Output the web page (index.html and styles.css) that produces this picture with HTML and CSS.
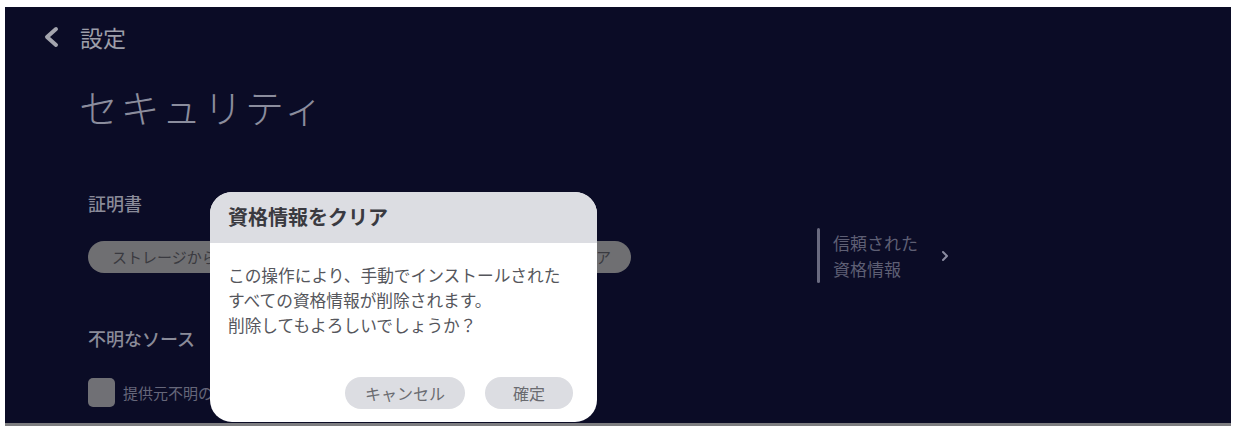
FILE: index.html
```html
<!DOCTYPE html>
<html lang="ja">
<head>
<meta charset="utf-8">
<link rel="stylesheet" href="styles.css">
</head>
<body>
<div class="screen">
  <div class="topbar">
    <svg class="back" width="22" height="24" viewBox="0 0 22 24"><path d="M15 4 L6 12 L15 20" fill="none" stroke="#a4a5ae" stroke-width="4" stroke-linecap="round" stroke-linejoin="round"/></svg>
    <span class="crumb">設定</span>
  </div>
  <h1 class="title">セキュリティ</h1>
  <div class="content">
    <div class="left">
      <div class="section">証明書</div>
      <div class="pills">
        <div class="pill pill-a">ストレージからインストール</div>
        <div class="pill pill-b">資格情報をクリア</div>
      </div>
      <div class="section section2">不明なソース</div>
      <div class="checkrow">
        <span class="box"></span>
        <span class="checklabel">提供元不明のアプリ</span>
      </div>
    </div>
    <div class="right">
      <div class="trust">
        <span class="bar"></span>
        <span class="trusttext">信頼された<br>資格情報</span>
        <svg class="chev" width="10" height="12" viewBox="0 0 10 12"><path d="M3 2 L7 6 L3 10" fill="none" stroke="#8a8ba0" stroke-width="2" stroke-linecap="round" stroke-linejoin="round"/></svg>
      </div>
    </div>
  </div>
  <div class="dialog">
    <div class="dlg-head">資格情報をクリア</div>
    <div class="dlg-body">
      <p>この操作により、手動でインストールされた<br>すべての資格情報が削除されます。<br>削除してもよろしいでしょうか？</p>
    </div>
    <div class="dlg-actions">
      <span class="btn btn-cancel">キャンセル</span>
      <span class="btn btn-ok">確定</span>
    </div>
  </div>
</div>
</body>
</html>
```

FILE: styles.css
```css
html, body {
  margin: 0;
  padding: 0;
  background: #ffffff;
}
body {
  width: 1234px;
  height: 426px;
  overflow: hidden;
  font-family: "Noto Sans CJK JP", "Noto Sans", sans-serif;
}
.screen {
  position: relative;
  margin: 7px 3px 0 5px;
  height: 416px;
  background: #0b0c26;
  border-bottom: 3px solid #7d7d80;
  overflow: hidden;
}
.topbar {
  display: flex;
  align-items: center;
  padding: 15px 0 0 36px;
  height: 30px;
}
.back {
  display: block;
}
.crumb {
  margin-left: 17px;
  font-size: 23px;
  line-height: 30px;
  color: #9d9ea9;
}
.title {
  margin: 29px 0 0 74px;
  font-size: 39px;
  font-weight: 300;
  line-height: 50px;
  color: #8b8d9d;
  letter-spacing: 2.5px;
}
.content {
  display: flex;
  margin-top: 60px;
  padding-left: 83px;
}
.left {
  width: 729px;
}
.section {
  font-size: 18px;
  line-height: 24px;
  color: #8a8b99;
  font-weight: 500;
}
.pills {
  display: flex;
  gap: 80px;
  margin-top: 26px;
}
.pill {
  height: 32px;
  border-radius: 16px;
  background: #6f6f72;
  color: #3a3a40;
  font-size: 15px;
  line-height: 32px;
  padding: 0 24px;
  white-space: nowrap;
}
.pill-a {
  width: 224px;
}
.pill-b {
  width: 147px;
  text-align: right;
  padding-right: 20px;
}
.section2 {
  margin-top: 53px;
}
.checkrow {
  display: flex;
  align-items: center;
  margin-top: 28px;
}
.box {
  width: 27px;
  height: 29px;
  border-radius: 5px;
  background: #707075;
}
.checklabel {
  margin-left: 8px;
  white-space: nowrap;
  font-size: 15px;
  color: #66677a;
}
.right {
  padding-top: 37px;
}
.trust {
  display: flex;
  align-items: center;
}
.bar {
  width: 3px;
  height: 55px;
  background: #6a6b80;
  border-radius: 2px;
}
.trusttext {
  margin-left: 13px;
  font-size: 17px;
  line-height: 26px;
  color: #5e5f74;
}
.chev {
  margin-left: 22px;
  display: block;
}
.dialog {
  position: absolute;
  left: 205px;
  top: 185px;
  width: 387px;
  height: 230px;
  background: #ffffff;
  border-radius: 22px;
  overflow: hidden;
  display: flex;
  flex-direction: column;
}
.dlg-head {
  height: 51px;
  background: #dcdde2;
  padding-left: 18px;
  font-size: 20px;
  font-weight: 700;
  line-height: 50px;
  color: #3a3a40;
}
.dlg-body {
  padding: 20px 0 0 18px;
}
.dlg-body p {
  margin: 0;
  font-size: 16.7px;
  line-height: 25px;
  color: #55565c;
}
.dlg-actions {
  display: flex;
  justify-content: flex-end;
  gap: 20px;
  padding: 0 24px 0 0;
  margin-top: 39px;
}
.btn {
  height: 32px;
  border-radius: 16px;
  background: #dcdde2;
  color: #6a6b70;
  font-size: 16px;
  line-height: 32px;
  text-align: center;
}
.btn-cancel {
  width: 120px;
}
.btn-ok {
  width: 88px;
}
```
